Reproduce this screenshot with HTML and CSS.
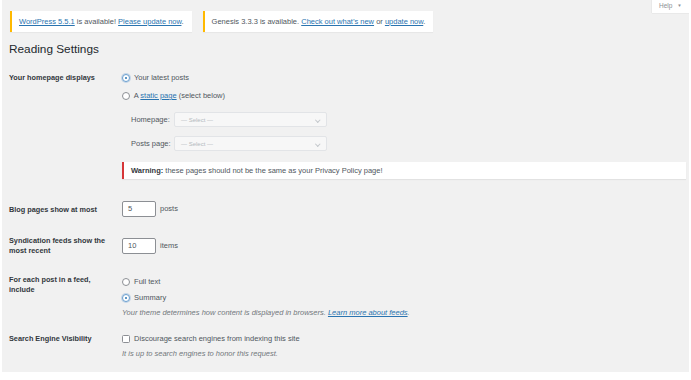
FILE: index.html
```html
<!DOCTYPE html>
<html lang="en">
<head>
  <meta charset="UTF-8" />
  <title>Reading Settings</title>
  <link rel="stylesheet" href="styles.css">
</head>
<body>
  <div class="screen">
    <a href="#" class="help-tab">Help <span class="caret">&#9660;</span></a>

    <div class="wrap">
      <div class="notices">
        <div class="notice">
          <a href="#">WordPress 5.5.1</a> is available! <a href="#">Please update now</a>.
        </div>
        <div class="notice">
          Genesis 3.3.3 is available. <a href="#">Check out what&rsquo;s new</a> or <a href="#">update now</a>.
        </div>
      </div>

      <h1>Reading Settings</h1>

      <form class="form-table">
        <div class="row row-front">
          <div class="label">Your homepage displays</div>
          <div class="field">
            <label class="choice"><input type="radio" name="front" checked> Your latest posts</label>
            <label class="choice"><input type="radio" name="front"> A <a href="#">static page</a> (select below)</label>
            <div class="page-selects">
              <div class="select-line">
                <span class="select-label">Homepage:</span>
                <span class="select">&mdash; Select &mdash;</span>
              </div>
              <div class="select-line">
                <span class="select-label">Posts page:</span>
                <span class="select">&mdash; Select &mdash;</span>
              </div>
            </div>
            <div class="notice-warning"><strong>Warning:</strong> these pages should not be the same as your Privacy Policy page!</div>
          </div>
        </div>

        <div class="row row-blog">
          <div class="label">Blog pages show at most</div>
          <div class="field inline">
            <span class="small-text">5</span> posts
          </div>
        </div>

        <div class="row row-feed">
          <div class="label">Syndication feeds show the most recent</div>
          <div class="field inline">
            <span class="small-text">10</span> items
          </div>
        </div>

        <div class="row row-include">
          <div class="label">For each post in a feed, include</div>
          <div class="field">
            <label class="choice"><input type="radio" name="feed"> Full text</label>
            <label class="choice"><input type="radio" name="feed" checked> Summary</label>
            <p class="description">Your theme determines how content is displayed in browsers. <a href="#">Learn more about feeds</a>.</p>
          </div>
        </div>

        <div class="row row-search">
          <div class="label">Search Engine Visibility</div>
          <div class="field">
            <label class="choice"><input type="checkbox"> Discourage search engines from indexing this site</label>
            <p class="description">It is up to search engines to honor this request.</p>
          </div>
        </div>
      </form>
    </div>
  </div>
</body>
</html>
```

FILE: styles.css
```css
html, body {
  margin: 0;
  padding: 0;
  background: #fff;
  font-family: 'Liberation Sans', Arial, sans-serif;
  font-size: 7.5px;
  line-height: 10px;
  color: #50575e;
}

a {
  color: #2a74b0;
}

.screen {
  position: relative;
  margin: 0 2px;
  height: 372px;
  background: #f1f1f1;
  overflow: hidden;
}

/* Help tab */
.help-tab {
  position: absolute;
  top: 0;
  right: 0;
  width: 37px;
  height: 13px;
  box-sizing: border-box;
  padding-left: 7px;
  background: #fff;
  color: #8c8f94;
  font-size: 6.5px;
  line-height: 12px;
  text-decoration: none;
  box-shadow: 0 0 1px rgba(0, 0, 0, 0.2);
}

.help-tab .caret {
  font-size: 4.5px;
  margin-left: 3px;
  vertical-align: 1px;
}

.wrap {
  padding: 0 3px 0 7px;
}

/* Notices */
.notices {
  display: flex;
  gap: 11px;
  padding: 11px 0 0 1px;
}

.notice {
  height: 21px;
  line-height: 21px;
  padding: 0 8px 0 7px;
  background: #fff;
  border-left: 2px solid #ffb900;
  box-shadow: 0 1px 1px rgba(0, 0, 0, 0.04);
  color: #50575e;
  white-space: nowrap;
}

h1 {
  margin: 10px 0 0;
  font-size: 11.8px;
  line-height: 14px;
  font-weight: 400;
  color: #23282d;
}

/* Form */
.form-table {
  margin-top: 17px;
}

.row {
  display: grid;
  grid-template-columns: 113px 1fr;
}

.label {
  font-weight: 700;
  font-size: 7.3px;
  color: #32373c;
  padding-right: 8px;
}

.choice {
  display: block;
  height: 10px;
  margin-bottom: 8px;
  white-space: nowrap;
}

.choice input {
  appearance: none;
  -webkit-appearance: none;
  margin: 0 2px 0 0;
  width: 8px;
  height: 8px;
  border: 1px solid #8c8f94;
  border-radius: 50%;
  background: #fff;
  box-sizing: border-box;
  position: relative;
  vertical-align: -1.5px;
}

.choice input[type="radio"]:checked {
  border-color: #6a9fcf;
  box-shadow: 0 0 0 1px rgba(66, 137, 203, 0.25);
}

.choice input[type="radio"]:checked::before {
  content: "";
  position: absolute;
  left: 2px;
  top: 2px;
  width: 2px;
  height: 2px;
  border-radius: 50%;
  background: #2a74b0;
}

.choice input[type="checkbox"] {
  border-radius: 1.5px;
}

.page-selects {
  display: flex;
  flex-direction: column;
  gap: 9px;
  padding: 3px 0 0 9px;
}

.select-line {
  display: flex;
  align-items: center;
}

.select-label {
  width: 43px;
  color: #50575e;
}

.select {
  position: relative;
  width: 153px;
  height: 15px;
  box-sizing: border-box;
  padding-left: 6px;
  line-height: 14px;
  font-size: 6px;
  color: #b4b9be;
  background: #f7f7f7;
  border: 1px solid #e2e4e7;
  border-radius: 2px;
}

.select::after {
  content: "";
  position: absolute;
  right: 7px;
  top: 4.5px;
  width: 2.5px;
  height: 2.5px;
  border-right: 1px solid #c3c7cb;
  border-bottom: 1px solid #c3c7cb;
  transform: rotate(45deg);
}

.notice-warning {
  margin-top: 11px;
  height: 17px;
  line-height: 17px;
  padding-left: 7px;
  background: #fff;
  border-left: 2px solid #d63638;
  box-shadow: 0 1px 1px rgba(0, 0, 0, 0.06);
  color: #50575e;
}

.notice-warning strong {
  color: #32373c;
}

.inline {
  display: flex;
  align-items: center;
  gap: 4px;
  align-self: start;
}

.small-text {
  width: 34px;
  height: 16px;
  box-sizing: border-box;
  padding-left: 5px;
  line-height: 14px;
  background: #fff;
  border: 1px solid #8c8f94;
  border-radius: 2px;
  color: #50575e;
}

.row-blog {
  margin-top: 22px;
}

.row-blog .label {
  padding-top: 4px;
}

.row-feed {
  margin-top: 19px;
}

.row-feed .field {
  padding-top: 2px;
}

.row-include {
  margin-top: 19px;
}

.row-include .field {
  padding-top: 1px;
}

.row-include .choice:first-child {
  margin-top: 1px;
  margin-bottom: 6px;
}

.description {
  margin: -3px 0 0;
  font-style: italic;
  color: #72777c;
}

.row-search {
  margin-top: 16px;
}
```
